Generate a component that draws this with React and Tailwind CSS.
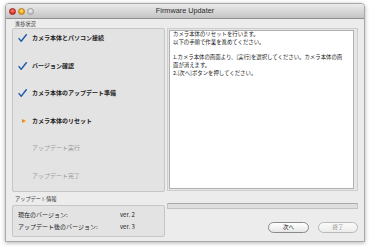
export default function App() {
  const Check = () => (
    <svg width="9" height="8" viewBox="0 0 9 8">
      <path d="M1 4.6 L3.2 7.2 L8.3 0.7" fill="none" stroke="#1d5ca8" strokeWidth="1.4" strokeLinecap="round" strokeLinejoin="round" />
    </svg>
  );
  const steps = [
    { t: "カメラ本体とパソコン接続", s: "done" },
    { t: "バージョン確認", s: "done" },
    { t: "カメラ本体のアップデート準備", s: "done" },
    { t: "カメラ本体のリセット", s: "cur" },
    { t: "アップデート実行", s: "todo" },
    { t: "アップデート完了", s: "todo" },
  ];
  return (
    <div className="w-[370px] h-[246px] bg-white pt-[3px] pl-[5px] font-['Noto_Sans_CJK_JP',sans-serif]">
      <div className="w-[360px] h-[239px] bg-[#ececec] rounded-t-[4px] border border-[#a8a8a8] shadow-[0_1px_4px_rgba(0,0,0,0.3)] flex flex-col overflow-hidden">
        {/* title bar */}
        <div className="h-[15px] shrink-0 grid grid-cols-[1fr_auto_1fr] items-center bg-gradient-to-b from-[#ebebeb] to-[#c4c4c4] border-b border-[#8f8f8f]">
          <div className="flex items-center gap-[2px] pl-[3px]">
            <div className="w-[7px] h-[7px] rounded-full bg-[radial-gradient(circle_at_50%_35%,#ff8a80,#d9261c_70%)] border border-[#a2241c]" />
            <div className="w-[7px] h-[7px] rounded-full bg-[radial-gradient(circle_at_50%_35%,#ffe08a,#f0a000_70%)] border border-[#b57a10]" />
            <div className="w-[7px] h-[7px] rounded-full bg-[radial-gradient(circle_at_50%_35%,#f2f2f2,#c4c4c4_70%)] border border-[#a0a0a0]" />
          </div>
          <div className="text-[7.3px] leading-none text-[#2a2a2a] font-['Liberation_Sans',sans-serif]">Firmware Updater</div>
          <div />
        </div>
        {/* body */}
        <div className="flex-1 flex gap-[2px] px-[6px]">
          {/* left */}
          <div className="w-[153px] flex flex-col">
            <div className="h-[9px] leading-[9px] text-[5.2px] text-[#333] pl-[3px]">進捗状況</div>
            <div className="h-[164px] bg-[#e3e3e3] border border-[#c6c6c6] rounded-[2px] flex flex-col pt-[3px] gap-[15.5px]">
              {steps.map((st, i) => (
                <div key={i} className="h-[12px] flex items-center pl-[4px]">
                  <div className="w-[10px] h-[10px] flex items-center pl-[1px]">
                    {st.s === "done" && <Check />}
                    {st.s === "cur" && (
                      <div className="ml-[4px] w-0 h-0 border-y-[2.5px] border-y-transparent border-l-[4px] border-l-[#f08a1c]" />
                    )}
                  </div>
                  <div
                    className={
                      "ml-[5px] text-[6px] leading-none " +
                      (st.s === "todo" ? "text-[#9c9c9c]" : "text-[#222] font-bold")
                    }
                  >
                    {st.t}
                  </div>
                </div>
              ))}
            </div>
            <div className="h-[13px] leading-[13px] text-[5.2px] text-[#333] pl-[3px]">アップデート情報</div>
            <div className="h-[32px] bg-[#e3e3e3] border border-[#c6c6c6] rounded-[2px] pt-[3px] pl-[5px] flex flex-col gap-[2px] text-[6px] text-[#1a1a1a]">
              <div className="h-[10px] grid grid-cols-[102px_1fr] items-center">
                <span>現在のバージョン:</span>
                <span>ver. 2</span>
              </div>
              <div className="h-[10px] grid grid-cols-[102px_1fr] items-center">
                <span>アップデート後のバージョン:</span>
                <span>ver. 3</span>
              </div>
            </div>
          </div>
          {/* right */}
          <div className="w-[191px] flex flex-col pt-[9px]">
            <div className="h-[163px] border border-[#cdcdcd] bg-[#e6e6e6] p-[1px] pr-[3px]">
              <div className="h-full bg-white border border-[#b0b0b0] pl-[3px] text-[5.4px] leading-[7.7px] text-[#222]">
                <div>カメラ本体のリセットを行います。</div>
                <div>以下の手順で作業を進めてください。</div>
                <div>&nbsp;</div>
                <div className="whitespace-nowrap">1.カメラ本体の画面より、[実行]を選択してください。カメラ本体の画</div>
                <div>面が消えます。</div>
                <div>2.[次へ]ボタンを押してください。</div>
              </div>
            </div>
            <div className="mt-[12px] h-[6px] border border-[#c2c2c2] border-t-[#a9a9a9] bg-[#dedede] rounded-[1px]" />
            <div className="mt-[13px] flex justify-end gap-[9px]">
              <div className="w-[41px] h-[11px] rounded-full border border-[#8a8a8a] bg-gradient-to-b from-white to-[#e6e6e6] flex items-center justify-center text-[5.5px] text-[#222]">
                次へ
              </div>
              <div className="w-[40px] h-[11px] rounded-full border border-[#b9b9b9] bg-gradient-to-b from-[#fafafa] to-[#ececec] flex items-center justify-center text-[5.5px] text-[#9a9a9a]">
                終了
              </div>
            </div>
          </div>
        </div>
      </div>
    </div>
  );
}
